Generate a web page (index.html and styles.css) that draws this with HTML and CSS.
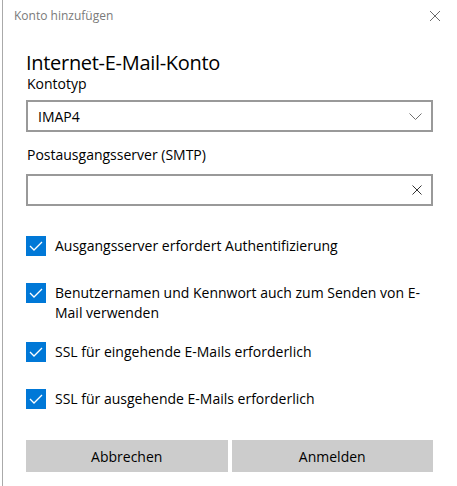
FILE: index.html
```html
<!DOCTYPE html>
<html lang="de">
<head>
<meta charset="utf-8">
<link rel="stylesheet" href="styles.css">
</head>
<body>
<div class="dialog">
  <div class="titlebar">
    <span class="title">Konto hinzufügen</span>
    <svg class="close" width="12" height="12" viewBox="0 0 12 12"><path d="M1 1 L11 11 M11 1 L1 11" stroke="#6b6b6b" stroke-width="1" fill="none"/></svg>
  </div>
  <div class="content">
    <h1 class="heading">Internet-E-Mail-Konto</h1>
    <div class="label first">Kontotyp</div>
    <div class="field select">
      <span class="value">IMAP4</span>
      <svg class="chev" width="13" height="7" viewBox="0 0 13 7"><path d="M0.5 0.5 L6.5 6.5 L12.5 0.5" stroke="#707070" stroke-width="1" fill="none"/></svg>
    </div>
    <div class="label">Postausgangsserver (SMTP)</div>
    <div class="field input">
      <span class="value"></span>
      <svg class="clear" width="10" height="10" viewBox="0 0 10 10"><path d="M0.5 0.5 L9.5 9.5 M9.5 0.5 L0.5 9.5" stroke="#333" stroke-width="1" fill="none"/></svg>
    </div>
    <div class="checks">
      <div class="check">
        <span class="box"><svg width="20" height="20" viewBox="0 0 20 20"><path d="M4 10 L8 14 L16 6" stroke="#fff" stroke-width="1.3" fill="none"/></svg></span>
        <span class="ctext">Ausgangsserver erfordert Authentifizierung</span>
      </div>
      <div class="check wrap">
        <span class="box"><svg width="20" height="20" viewBox="0 0 20 20"><path d="M4 10 L8 14 L16 6" stroke="#fff" stroke-width="1.3" fill="none"/></svg></span>
        <span class="ctext">Benutzernamen und Kennwort auch zum Senden von E-Mail verwenden</span>
      </div>
      <div class="check">
        <span class="box"><svg width="20" height="20" viewBox="0 0 20 20"><path d="M4 10 L8 14 L16 6" stroke="#fff" stroke-width="1.3" fill="none"/></svg></span>
        <span class="ctext">SSL für eingehende E-Mails erforderlich</span>
      </div>
      <div class="check">
        <span class="box"><svg width="20" height="20" viewBox="0 0 20 20"><path d="M4 10 L8 14 L16 6" stroke="#fff" stroke-width="1.3" fill="none"/></svg></span>
        <span class="ctext">SSL für ausgehende E-Mails erforderlich</span>
      </div>
    </div>
    <div class="buttons">
      <button class="btn">Abbrechen</button>
      <button class="btn">Anmelden</button>
    </div>
  </div>
</div>
</body>
</html>
```

FILE: styles.css
```css
html, body {
  margin: 0;
  padding: 0;
  background: #fff;
}
body {
  font-family: "Open Sans", "Noto Sans", sans-serif;
  color: #000;
  padding-left: 2px;
}
.dialog {
  border-left: 1px solid #aaaaaa;
  height: 486px;
  box-sizing: border-box;
}
.titlebar {
  height: 30px;
  display: flex;
  align-items: center;
  justify-content: space-between;
  padding: 0 16px 0 11px;
}
.title {
  font-size: 12px;
  color: #7a7a7a;
}
.close {
  margin-top: 1px;
}
.content {
  padding: 0 24px 0 23px;
  display: flex;
  flex-direction: column;
}
.heading {
  margin: 21px 0 0 0;
  font-size: 20px;
  font-weight: normal;
  line-height: 24px;
  letter-spacing: -0.3px;
}
.label {
  font-size: 14px;
  line-height: 20px;
  margin-top: 13px;
  margin-bottom: 9px;
  padding-left: 1px;
}
.label.first {
  margin-top: 0;
  line-height: 18px;
  margin-bottom: 7px;
}
.field {
  height: 32px;
  box-sizing: border-box;
  border: 2px solid #999999;
  display: flex;
  align-items: center;
  justify-content: space-between;
  padding: 0 9px 0 10px;
}
.value {
  font-size: 14px;
}
.checks {
  display: flex;
  flex-direction: column;
  margin-top: 30px;
  gap: 27px;
}
.check {
  display: flex;
  align-items: flex-start;
  gap: 9px;
}
.check.wrap {
  margin-bottom: -8px;
}
.box {
  width: 20px;
  height: 20px;
  background: #0078d7;
  flex: none;
  display: block;
}
.box svg {
  display: block;
}
.ctext {
  font-size: 14px;
  line-height: 20px;
}
.buttons {
  display: grid;
  grid-template-columns: 1fr 1fr;
  gap: 4px;
  margin-top: 31px;
}
.btn {
  height: 32px;
  border: none;
  background: #cccccc;
  font-family: inherit;
  font-size: 14px;
  color: #000;
  padding: 0;
}
```
